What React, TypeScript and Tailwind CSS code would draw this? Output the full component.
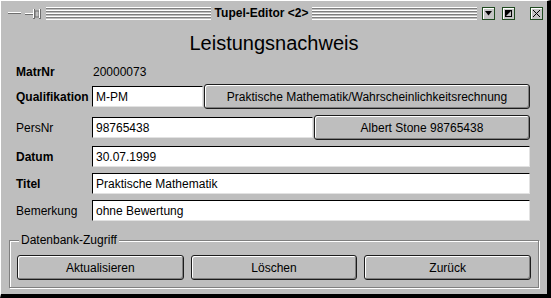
import React from "react";

const stripes =
  "h-[13px] flex-1 bg-[repeating-linear-gradient(to_bottom,#ffffff_0px,#ffffff_1px,#7f7f7f_1px,#7f7f7f_2px,#bebebe_2px,#bebebe_3px)]";

const inputCls =
  "flex h-[21px] items-center border-t border-l border-t-black border-l-black border-r border-b border-r-[#e2e2e2] border-b-[#e2e2e2] bg-white pl-[3px] text-[12px] text-black";

const buttonCls =
  "flex h-[25px] items-center justify-center rounded-[3px] border border-[#1c1c1c] bg-[#bebebe] text-[12px] text-black shadow-[inset_1px_1px_0_#ffffff,inset_-1px_-1px_0_#7f7f7f]";

function TitleButton({ children }: { children: React.ReactNode }) {
  return (
    <div className="flex h-[13px] w-[13px] items-center justify-center border border-[#1f4a1f] bg-[#c4c4c4] shadow-[inset_1px_1px_0_#ffffff]">
      {children}
    </div>
  );
}

function TitleBar() {
  return (
    <div className="flex h-[24px] items-center">
      <div className="flex w-[45px] shrink-0 items-center pl-[7px]">
        <svg width="13" height="3" viewBox="0 0 13 3">
          <rect x="0" y="0" width="13" height="1" fill="#ffffff" />
          <rect x="0" y="1" width="13" height="1" fill="#6e6e6e" />
        </svg>
        <svg width="16" height="11" viewBox="0 0 16 11" className="ml-[4px]">
          <rect x="0" y="5" width="8" height="1" fill="#ffffff" />
          <rect x="0" y="6" width="8" height="1" fill="#6e6e6e" />
          <rect x="8" y="1" width="2" height="10" fill="#6e6e6e" />
          <rect x="8" y="1" width="1" height="9" fill="#ffffff" />
          <rect x="10" y="3" width="4" height="6" fill="none" stroke="#6e6e6e" strokeWidth="1" />
          <rect x="14" y="1" width="2" height="10" fill="#6e6e6e" />
          <rect x="14" y="1" width="1" height="9" fill="#ffffff" />
        </svg>
      </div>
      <div className={stripes} />
      <div className="px-[4px] text-[12px] font-bold text-black">Tupel-Editor &lt;2&gt;</div>
      <div className={stripes} />
      <div className="ml-[5px] flex items-center gap-[7px] pr-[4px]">
        <TitleButton>
          <svg width="9" height="9" viewBox="0 0 9 9">
            <polygon points="1,2 8,2 4.5,6.5" fill="#000" />
          </svg>
        </TitleButton>
        <TitleButton>
          <svg width="9" height="9" viewBox="0 0 9 9">
            <rect x="1.5" y="1.5" width="6" height="6" fill="none" stroke="#000" />
            <polygon points="1,1 8,1 1,8" fill="#000" />
          </svg>
        </TitleButton>
        <div className="ml-[8px]">
          <TitleButton>
            <svg width="9" height="9" viewBox="0 0 9 9">
              <path d="M1 1 L8 8 M8 1 L1 8" stroke="#000" strokeWidth="1" />
            </svg>
          </TitleButton>
        </div>
      </div>
    </div>
  );
}

function Row({
  label,
  bold,
  children,
  className = "",
}: {
  label: string;
  bold?: boolean;
  children: React.ReactNode;
  className?: string;
}) {
  return (
    <div className={`flex items-center ${className}`}>
      <div className={`w-[76px] shrink-0 text-[12px] text-black ${bold ? "font-bold" : ""}`}>
        {label}
      </div>
      {children}
    </div>
  );
}

export default function App() {
  return (
    <div className="h-[298px] w-[551px] border-t border-l border-t-white border-l-white border-r-[4px] border-b-[4px] border-r-black border-b-black bg-[#bebebe] font-['Liberation_Sans',Arial,sans-serif] text-black">
      <TitleBar />
      <div className="mt-[6px] h-[24px] text-center text-[20px] leading-[24px]">Leistungsnachweis</div>

      <div className="flex flex-col pr-[17px] pl-[15px]">
        <Row label="MatrNr" bold className="mt-[9px] h-[16px]">
          <span className="pl-[1px] text-[12px]">20000073</span>
        </Row>
        <Row label="Qualifikation" bold className="mt-[4px] h-[25px]">
          <div className={`${inputCls} w-[111px]`}>M-PM</div>
          <div className={`${buttonCls} ml-[1px] flex-1`}>
            Praktische Mathematik/Wahrscheinlichkeitsrechnung
          </div>
        </Row>
        <Row label="PersNr" className="mt-[6px] h-[25px]">
          <div className={`${inputCls} w-[221px]`}>98765438</div>
          <div className={`${buttonCls} ml-[1px] flex-1`}>Albert Stone 98765438</div>
        </Row>
        <Row label="Datum" bold className="mt-[6px] h-[21px]">
          <div className={`${inputCls} flex-1`}>30.07.1999</div>
        </Row>
        <Row label="Titel" bold className="mt-[6px] h-[21px]">
          <div className={`${inputCls} flex-1`}>Praktische Mathematik</div>
        </Row>
        <Row label="Bemerkung" className="mt-[6px] h-[21px]">
          <div className={`${inputCls} flex-1`}>ohne Bewertung</div>
        </Row>
      </div>

      <div className="relative mx-[8px] mt-[19px] h-[48px] border border-[#7f7f7f] px-[7px] pt-[14px] shadow-[inset_1px_1px_0_#ffffff,1px_1px_0_#ffffff]">
        <span className="absolute top-[-9px] left-[9px] bg-[#bebebe] px-[2px] text-[12px] leading-[16px]">
          Datenbank-Zugriff
        </span>
        <div className="grid grid-cols-3 gap-[7px]">
          <div className={buttonCls}>Aktualisieren</div>
          <div className={buttonCls}>Löschen</div>
          <div className={buttonCls}>Zurück</div>
        </div>
      </div>
    </div>
  );
}
